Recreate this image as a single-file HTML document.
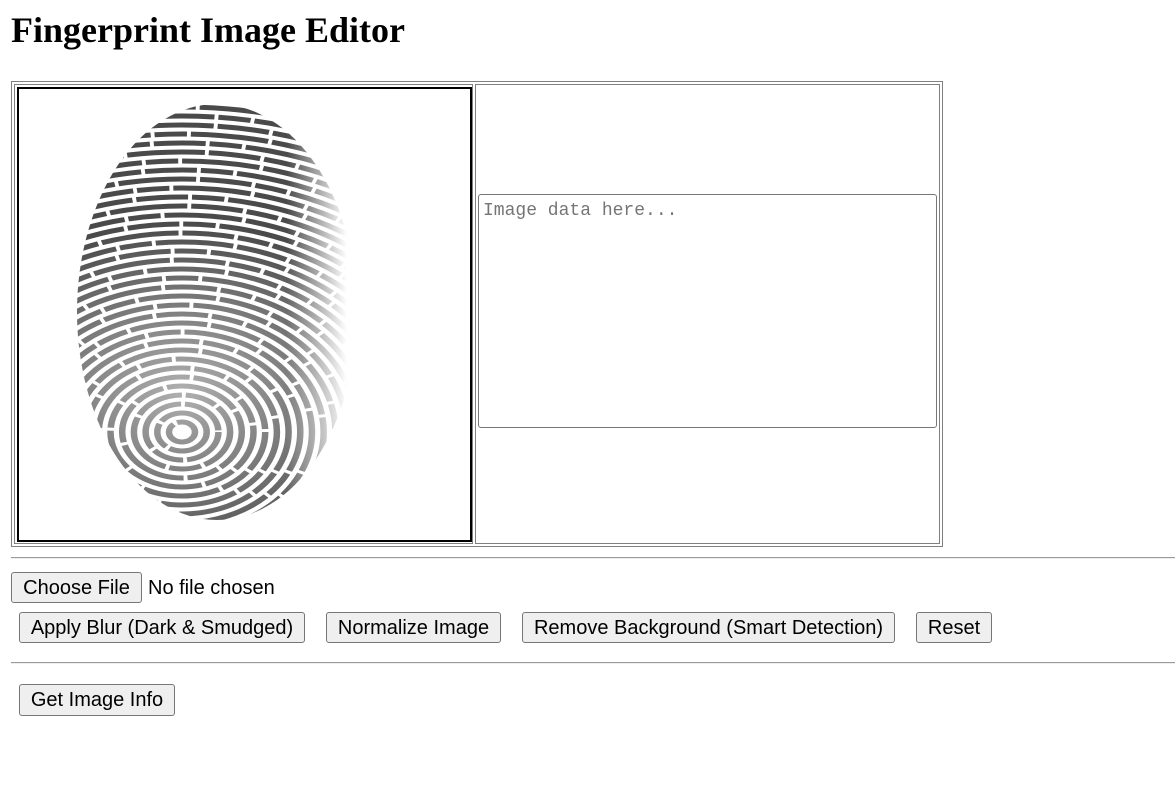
<!DOCTYPE html>
<html><head><meta charset="utf-8"><style>
*{box-sizing:border-box}
html,body{margin:0;overflow:hidden}
body{background:#fff;width:1175px;height:789px;position:relative;font-family:"Liberation Sans",Arial,sans-serif}
.a{position:absolute}
h1{position:absolute;left:11px;top:9px;margin:0;font:bold 36px "Liberation Serif",serif;color:#000;white-space:nowrap;line-height:42px}
.btn{position:absolute;background:#efefef;border:1px solid #767676;border-radius:3px;font-size:20px;color:#000;display:flex;align-items:center;justify-content:center;white-space:nowrap;padding-top:1px}
.hr{position:absolute;left:11px;width:1164px;height:2px;border-top:1px solid #9a9a9a;border-bottom:1px solid #eee}
</style></head><body>
<h1>Fingerprint Image Editor</h1>
<div class="a" style="left:11px;top:81px;width:932px;height:466px;border:1px solid #808080"></div>
<div class="a" style="left:14px;top:84px;width:459px;height:460px;border:1px solid #808080"></div>
<div class="a" style="left:475px;top:84px;width:465px;height:460px;border:1px solid #808080"></div>
<div class="a" style="left:17px;top:87px;width:455px;height:455px;border:2px solid #000;background:#fff;overflow:hidden">
<svg width="451" height="451" viewBox="17 87 451 451" style="position:absolute;left:0;top:0">
<defs>
<linearGradient id="fade" gradientUnits="userSpaceOnUse" x1="285" y1="0" x2="345" y2="0">
<stop offset="0" stop-color="#fff"/><stop offset="1" stop-color="#000"/></linearGradient>
<mask id="m"><rect x="17" y="87" width="451" height="451" fill="url(#fade)"/></mask>
<clipPath id="c"><ellipse cx="215" cy="310" rx="140" ry="208"/></clipPath>
<radialGradient id="rg" gradientUnits="userSpaceOnUse" cx="0" cy="-40" r="170"><stop offset="0" stop-color="#b0b0b0"/><stop offset="1" stop-color="#4a4a4a"/></radialGradient>
</defs>
<g clip-path="url(#c)" mask="url(#m)">
<g transform="translate(180,430) scale(1.3,1)" fill="none" stroke="url(#rg)" stroke-width="5" stroke-dasharray="40 3 25 3 60 3">
<circle r="10"/><circle r="19"/><circle r="28"/><circle r="37"/><circle r="46"/><circle r="55"/><circle r="64"/><circle r="73"/><circle r="82"/><circle r="91"/><circle r="100"/><circle r="109"/><circle r="118"/><circle r="127"/><circle r="136"/><circle r="145"/><circle r="154"/><circle r="163"/><circle r="172"/><circle r="181"/><circle r="190"/><circle r="199"/><circle r="208"/><circle r="217"/><circle r="226"/><circle r="235"/><circle r="244"/><circle r="253"/><circle r="262"/><circle r="271"/><circle r="280"/><circle r="289"/><circle r="298"/><circle r="307"/><circle r="316"/><circle r="325"/><circle r="334"/><circle r="343"/><circle r="352"/>
</g></g>
</svg></div>
<div class="a" style="left:478px;top:194px;width:459px;height:234px;border:1px solid #767676;border-radius:3px;padding:6px 4px;font:18px 'Liberation Mono',monospace;color:#757575">Image data here...</div>
<div class="hr" style="top:557px"></div>
<div class="btn" style="left:11px;top:572px;width:131px;height:31px">Choose File</div>
<div class="a" style="left:148px;top:577px;font-size:20px">No file chosen</div>
<div class="btn" style="left:19px;top:612px;width:286px;height:31px">Apply Blur (Dark &amp; Smudged)</div>
<div class="btn" style="left:326px;top:612px;width:175px;height:31px">Normalize Image</div>
<div class="btn" style="left:522px;top:612px;width:373px;height:31px">Remove Background (Smart Detection)</div>
<div class="btn" style="left:916px;top:612px;width:76px;height:31px">Reset</div>
<div class="hr" style="top:662px"></div>
<div class="btn" style="left:19px;top:684px;width:156px;height:32px">Get Image Info</div>
</body></html>
